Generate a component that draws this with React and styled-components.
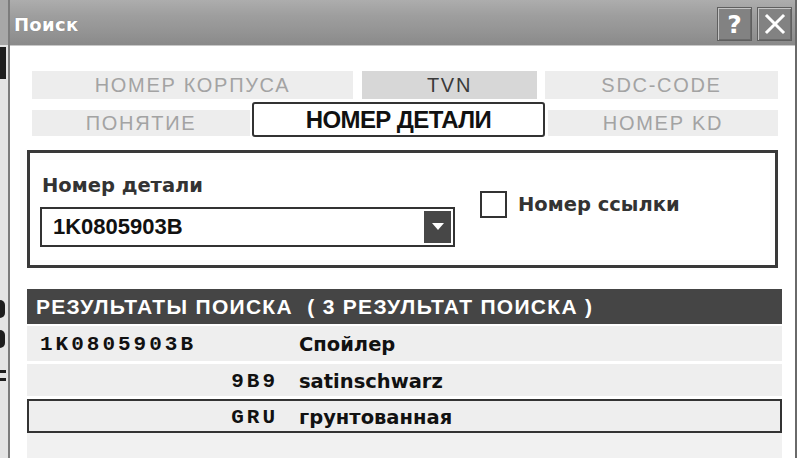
import React from "react";
import styled, { createGlobalStyle } from "styled-components";

const Global = createGlobalStyle`
  html, body { margin: 0; padding: 0; background: #ffffff; }
  body { width: 800px; height: 458px; overflow: hidden; font-family: "Liberation Sans", Arial, sans-serif; }
  #root { width: 800px; height: 458px; }
`;

const Root = styled.div`
  display: flex;
  width: 800px;
  height: 458px;
  overflow: hidden;
  background: #ffffff;
`;

const Backdrop = styled.div`
  position: relative;
  width: 8px;
  flex: none;
  background: linear-gradient(#a7a7a7 0 45px, #e4e4e4 45px);
`;

const BackdropMark = styled.div`
  position: absolute;
  left: 0;
  width: ${(p) => p.$w}px;
  top: ${(p) => p.$top}px;
  height: ${(p) => p.$h}px;
  background: #1e1e1e;
  border-radius: ${(p) => (p.$round ? "0 6px 6px 0" : "0")};
`;

const Window = styled.div`
  flex: 1;
  display: flex;
  flex-direction: column;
  border-left: 2px solid #7c7c7c;
  border-right: 2px solid #6a6a6a;
  margin-right: 3px;
  min-width: 0;
`;

const TitleBar = styled.div`
  height: 46px;
  flex: none;
  display: flex;
  align-items: center;
  justify-content: space-between;
  padding: 0 3px 0 4px;
  background: linear-gradient(#adadad 0%, #9e9e9e 35%, #949494 70%, #8a8a8a 100%);
  border-bottom: 1px solid #c8c8c8;
  box-sizing: border-box;
`;

const Title = styled.div`
  color: #ffffff;
  font-family: "DejaVu Sans", Verdana, sans-serif;
  font-weight: bold;
  font-size: 18px;
  letter-spacing: 0.3px;
  text-shadow: 0 0 1px #777;
  margin-top: 3px;
`;

const TitleButtons = styled.div`
  display: flex;
  gap: 5px;
  margin-top: 3px;
`;

const TitleButton = styled.div`
  width: 35px;
  height: 34px;
  box-sizing: border-box;
  display: flex;
  align-items: center;
  justify-content: center;
  background: #828282;
  border: 1px solid #5f5f5f;
  box-shadow: inset 1px 1px 0 #c4c4c4, inset -1px -1px 0 #6a6a6a;
  color: #ffffff;
  font-family: "DejaVu Sans", Verdana, sans-serif;
  font-weight: bold;
  font-size: 25px;
  line-height: 1;
`;

const Body = styled.div`
  flex: 1;
  background: #ffffff;
  padding: 26px 11px 0 17px;
  display: flex;
  flex-direction: column;
`;

const Tabs = styled.div`
  display: flex;
  flex-direction: column;
  gap: 2px;
  margin-left: 5px;
  width: 746px;
`;

const TabRow = styled.div`
  display: flex;
  align-items: flex-end;
  height: ${(p) => p.$h}px;
`;

const Tab = styled.div`
  box-sizing: border-box;
  width: ${(p) => p.$w}px;
  margin-left: ${(p) => p.$ml || 0}px;
  height: ${(p) => (p.$active ? 35 : p.$h || 28)}px;
  display: flex;
  align-items: center;
  justify-content: center;
  font-family: "Liberation Sans", Arial, sans-serif;
  font-size: ${(p) => (p.$active ? 24 : 20)}px;
  font-weight: ${(p) => (p.$active ? "bold" : "normal")};
  letter-spacing: ${(p) => (p.$active ? "-0.6px" : "1.7px")};
  color: ${(p) => (p.$active ? "#111111" : p.$strong ? "#3a3a3a" : "#a3a3a3")};
  background: ${(p) => (p.$active ? "#ffffff" : p.$strong ? "#d7d7d7" : "#ededed")};
  border: ${(p) => (p.$active ? "2px solid #333333" : "none")};
  border-radius: ${(p) => (p.$active ? "3px" : "0")};
  margin-bottom: ${(p) => (p.$active ? "0" : "1px")};
`;

const FormBox = styled.div`
  margin-top: 13px;
  width: 751px;
  height: 118px;
  box-sizing: border-box;
  border: 3px solid #3a3a3a;
  display: flex;
  align-items: flex-start;
  padding: 21px 0 0 10px;
  gap: 25px;
`;

const Field = styled.div`
  display: flex;
  flex-direction: column;
  gap: 10px;
`;

const Label = styled.div`
  font-family: "DejaVu Sans", Verdana, sans-serif;
  font-weight: bold;
  font-size: 19.5px;
  color: #333333;
  padding-left: 2px;
`;

const Select = styled.div`
  width: 415px;
  height: 40px;
  box-sizing: border-box;
  border: 2px solid #333333;
  display: flex;
  align-items: center;
  justify-content: space-between;
  padding: 0 2px 0 0;
`;

const SelectValue = styled.span`
  margin-left: 11px;
  font-family: "Liberation Sans", Arial, sans-serif;
  font-weight: bold;
  font-size: 22px;
  color: #111111;
`;

const DropButton = styled.div`
  width: 27px;
  height: 32px;
  background: #474747;
  display: flex;
  align-items: center;
  justify-content: center;
`;

const CheckRow = styled.div`
  display: flex;
  align-items: center;
  gap: 9px;
  margin-top: 17px;
`;

const CheckBox = styled.div`
  width: 27px;
  height: 27px;
  box-sizing: border-box;
  border: 2px solid #333333;
  background: #ffffff;
`;

const Results = styled.div`
  margin-top: 21px;
  width: 755px;
  display: flex;
  flex-direction: column;
  flex: 1;
  background: #f1f1f1;
`;

const ResultsHeader = styled.div`
  height: 35px;
  background: #454545;
  color: #ffffff;
  display: flex;
  align-items: center;
  padding-left: 9px;
  font-family: "Liberation Sans", Arial, sans-serif;
  font-weight: bold;
  font-size: 21px;
  letter-spacing: 1.3px;
  white-space: pre;
  border-bottom: 2px solid #ffffff;
`;

const ResultRow = styled.div`
  display: flex;
  align-items: center;
  height: ${(p) => p.$h}px;
  box-sizing: border-box;
  background: #eeeeee;
  border: ${(p) => (p.$selected ? "2px solid #333333" : "none")};
  border-bottom: ${(p) => (p.$selected ? "2px solid #333333" : "3px solid #ffffff")};
  margin-bottom: ${(p) => (p.$selected ? 3 : 0)}px;
  padding-left: ${(p) => (p.$selected ? 0 : 2)}px;
  padding-top: 2px;
`;

const Code = styled.div`
  width: 249px;
  padding-left: ${(p) => (p.$left ? 11 : 0)}px;
  box-sizing: border-box;
  text-align: ${(p) => (p.$left ? "left" : "right")};
  font-family: "Liberation Mono", "Courier New", monospace;
  font-weight: bold;
  font-size: 21px;
  letter-spacing: 3px;
  color: #111111;
`;

const Desc = styled.div`
  margin-left: 21px;
  font-family: "DejaVu Sans", Verdana, sans-serif;
  font-weight: bold;
  font-size: 19.5px;
  color: #111111;
`;

const rows = [
  { code: "1K0805903B", desc: "Спойлер", left: true, h: 38 },
  { code: "9B9", desc: "satinschwarz", h: 35 },
  { code: "GRU", desc: "грунтованная", selected: true, h: 34 },
];

export default function App() {
  return (
    <>
      <Global />
      <Root>
        <Backdrop>
          <BackdropMark $top={47} $h={32} $w={6} />
          <BackdropMark $top={300} $h={18} $w={5} $round />
          <BackdropMark $top={330} $h={18} $w={5} $round />
          <BackdropMark $top={370} $h={3} $w={6} />
          <BackdropMark $top={378} $h={3} $w={6} />
        </Backdrop>
        <Window>
          <TitleBar>
            <Title>Поиск</Title>
            <TitleButtons>
              <TitleButton>?</TitleButton>
              <TitleButton>
                <svg width="22" height="22" viewBox="0 0 22 22">
                  <path d="M3 3 L19 19 M19 3 L3 19" stroke="#ffffff" strokeWidth="3" strokeLinecap="square" />
                </svg>
              </TitleButton>
            </TitleButtons>
          </TitleBar>
          <Body>
            <Tabs>
              <TabRow $h={28}>
                <Tab $w={321}>НОМЕР КОРПУСА</Tab>
                <Tab $w={175} $ml={9} $strong>TVN</Tab>
                <Tab $w={233} $ml={8}>SDC-CODE</Tab>
              </TabRow>
              <TabRow $h={35}>
                <Tab $w={218} $h={26}>ПОНЯТИЕ</Tab>
                <Tab $w={293} $ml={2} $active>НОМЕР ДЕТАЛИ</Tab>
                <Tab $w={230} $ml={3} $h={26}>НОМЕР KD</Tab>
              </TabRow>
            </Tabs>
            <FormBox>
              <Field>
                <Label>Номер детали</Label>
                <Select>
                  <SelectValue>1K0805903B</SelectValue>
                  <DropButton>
                    <svg width="12" height="8" viewBox="0 0 12 8">
                      <path d="M0 0 L12 0 L6 7 Z" fill="#ffffff" />
                    </svg>
                  </DropButton>
                </Select>
              </Field>
              <CheckRow>
                <CheckBox />
                <Label>Номер ссылки</Label>
              </CheckRow>
            </FormBox>
            <Results>
              <ResultsHeader>{"РЕЗУЛЬТАТЫ ПОИСКА  ( 3 РЕЗУЛЬТАТ ПОИСКА )"}</ResultsHeader>
              {rows.map((r) => (
                <ResultRow key={r.code} $selected={r.selected} $h={r.h}>
                  <Code $left={r.left}>{r.code}</Code>
                  <Desc>{r.desc}</Desc>
                </ResultRow>
              ))}
            </Results>
          </Body>
        </Window>
      </Root>
    </>
  );
}
